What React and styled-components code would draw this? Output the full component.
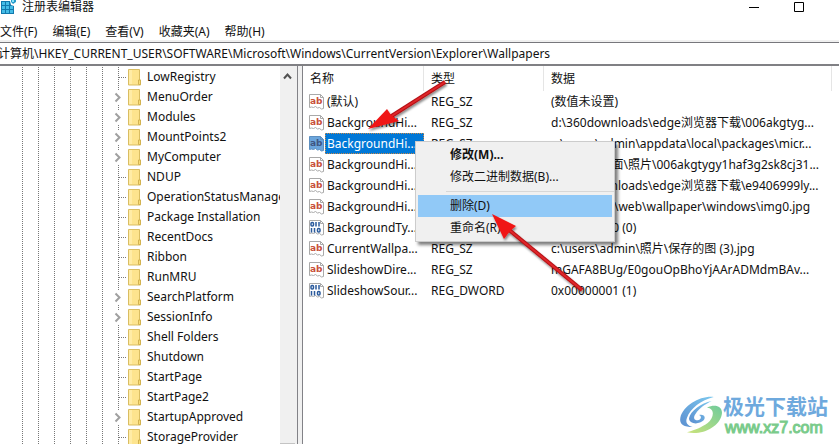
import React from 'react';
import styled, { createGlobalStyle, css } from 'styled-components';

const GlobalStyle = createGlobalStyle`
  * { box-sizing: border-box; }
  body {
    margin: 0;
    background: #fff;
    color: #111;
    font: 12px/20px "Noto Sans", "Noto Sans CJK SC", sans-serif;
    overflow: hidden;
  }
  button, input, table { font: inherit; color: inherit; }
`;

const Window = styled.div`
  position: relative;
  display: flex;
  flex-direction: column;
  height: 100vh;
  overflow: hidden;
`;

const TitleBar = styled.header`
  display: flex;
  align-items: flex-start;
  height: 20px;
`;

const Title = styled.h1`
  flex: 1;
  margin: 0 0 0 5px;
  font-size: 12px;
  font-weight: 400;
  line-height: 14px;
`;

const AppIcon = styled.svg`
  width: 17px;
  height: 15px;
`;

const CaptionButton = styled.button`
  width: 45px;
  height: 14px;
  padding: 0;
  border: 0;
  background: none;
  svg { display: block; margin: 0 auto; }
`;

const CaptionButtons = styled.div`
  display: flex;
  margin-right: 18px;
`;

const MenuBar = styled.nav`
  display: flex;
  gap: 15px;
  height: 22px;
  border-bottom: 2px solid #f0f0f0;
`;

const MenuButton = styled.button`
  padding: 2px 0 0;
  border: 0;
  background: none;
  line-height: 20px;
  white-space: nowrap;
`;

const AddressBar = styled.input`
  display: block;
  width: 100%;
  height: 24px;
  padding: 0 0 2px;
  border: 0;
  border-top: 1px solid #77777c;
  border-bottom: 2px solid #808084;
  border-radius: 0;
  outline: 0;
  background: #fff;
  text-indent: -2px;
`;

const Panes = styled.main`
  flex: 1;
  display: flex;
  min-height: 0;
`;

const TreePane = styled.section`
  flex: 0 0 298px;
  display: flex;
  min-width: 0;
  border-right: 1px solid #828287;
`;

const Tree = styled.ul`
  flex: 1 1 0;
  min-width: 0;
  margin: 0;
  padding: 1px 0 0;
  list-style: none;
  overflow: hidden;
`;

const TreeItem = styled.li`
  display: flex;
  align-items: center;
  height: 20px;
  white-space: nowrap;
`;

const Guides = styled.svg`
  flex: none;
  width: 127px;
  height: 20px;
`;

const FolderIcon = styled.svg`
  flex: none;
  width: 15px;
  height: 18px;
  margin-right: 5px;
`;

const ScrollBar = styled.div`
  flex: none;
  display: flex;
  flex-direction: column;
  justify-content: space-between;
  width: 17px;
  background: #f0f0f0;
`;

const ScrollButton = styled.button`
  width: 15px;
  height: 20px;
  padding: 0;
  border: 0;
  background: none;
  svg { display: block; margin: 0 auto; }
`;

const ScrollThumb = styled.div`
  width: 15px;
  height: 1px;
  background: #c4c4c4;
`;

const Splitter = styled.div`
  flex: none;
  width: 5px;
  background: #f0f0f0;
  border-right: 1px solid #828287;
`;

const ValuesPane = styled.section`
  flex: 1;
  min-width: 0;
  overflow: hidden;
`;

const Values = styled.table`
  width: 100%;
  table-layout: fixed;
  border-collapse: separate;
  border-spacing: 0;
`;

const Col = styled.col`
  width: ${(p) => p.$width};
`;

const HeadCell = styled.th`
  height: 25px;
  padding: 0 0 0 7px;
  border-right: 1px solid #e5e5e5;
  font-weight: 400;
  text-align: left;
  &:last-child { border: 0; }
`;

const Cell = styled.td`
  height: 21px;
  padding: 0 0 0 7px;
  line-height: 21px;
  white-space: nowrap;
`;

const NameCell = styled(Cell)`
  padding-left: 5px;
`;

const NameBox = styled.div`
  display: flex;
  align-items: center;
  height: 21px;
`;

const ValueIcon = styled.svg`
  flex: none;
  width: 17px;
  height: 17px;
`;

const ValueName = styled.span`
  flex: 1;
  height: 21px;
  padding-left: 2px;
  line-height: 21px;
  overflow: hidden;
  ${(p) => p.$selected && css`
    color: #fff;
    background: #0078d7;
    outline: 1px dotted #c98a4b;
    outline-offset: -1px;
  `}
`;

const ContextMenu = styled.div`
  position: absolute;
  left: 415px;
  top: 141px;
  display: flex;
  flex-direction: column;
  width: 200px;
  padding: 2px;
  border: 1px solid #ccc;
  background: #f0f0f0;
  box-shadow: 3px 3px 3px rgba(0, 0, 0, 0.5);
`;

const ContextItem = styled.button`
  height: 22px;
  padding: 0 0 0 32px;
  border: 0;
  background: ${(p) => (p.$active ? '#91c9f7' : 'transparent')};
  font-weight: ${(p) => (p.$strong ? 700 : 400)};
  line-height: 22px;
  text-align: left;
`;

const Separator = styled.hr`
  width: 168px;
  margin: 3px 0 3px 28px;
  border: 0;
  border-top: 1px solid #d7d7d7;
`;

const Arrows = styled.svg`
  position: absolute;
  left: 360px;
  top: 74px;
  width: 240px;
  height: 230px;
  pointer-events: none;
`;

const Watermark = styled.a`
  position: absolute;
  right: 11px;
  bottom: 6px;
  display: flex;
  align-items: center;
  text-decoration: none;
`;

const Swirl = styled.svg`
  width: 44px;
  height: 40px;
`;

const BrandText = styled.span`
  display: flex;
  flex-direction: column;
`;

const BrandName = styled.strong`
  color: #6ea9dd;
  font: 700 21px/26px "Noto Sans CJK SC", sans-serif;
`;

const BrandSite = styled.span`
  padding-left: 2px;
  color: #7acb8b;
  font: 16px/20px "Liberation Sans", sans-serif;
  -webkit-text-stroke: 1px #7acb8b;
`;

const MENUS = ['文件(F)', '编辑(E)', '查看(V)', '收藏夹(A)', '帮助(H)'];

const KEYS = [
  ['LowRegistry', false],
  ['MenuOrder', true],
  ['Modules', true],
  ['MountPoints2', true],
  ['MyComputer', true],
  ['NDUP', false],
  ['OperationStatusManager', false],
  ['Package Installation', false],
  ['RecentDocs', false],
  ['Ribbon', false],
  ['RunMRU', false],
  ['SearchPlatform', true],
  ['SessionInfo', true],
  ['Shell Folders', false],
  ['Shutdown', false],
  ['StartPage', false],
  ['StartPage2', false],
  ['StartupApproved', true],
  ['StorageProvider', false],
];

const VALUES = [
  ['(默认)', 'REG_SZ', '(数值未设置)'],
  ['BackgroundHi...', 'REG_SZ', 'd:\\360downloads\\edge浏览器下载\\006akgtyg...'],
  ['BackgroundHi...', 'REG_SZ', 'c:\\users\\admin\\appdata\\local\\packages\\micr...', true],
  ['BackgroundHi...', 'REG_SZ', 'c:\\users\\桌面\\照片\\006akgtygy1haf3g2sk8cj31...'],
  ['BackgroundHi...', 'REG_SZ', 'd:\\360downloads\\edge浏览器下载\\e9406999ly...'],
  ['BackgroundHi...', 'REG_SZ', 'c:\\windows\\web\\wallpaper\\windows\\img0.jpg'],
  ['BackgroundTy...', 'REG_DWORD', '0x00000000 (0)'],
  ['CurrentWallpa...', 'REG_SZ', 'c:\\users\\admin\\照片\\保存的图 (3).jpg'],
  ['SlideshowDire...', 'REG_SZ', 'mGAFA8BUg/E0gouOpBhoYjAArADMdmBAv...'],
  ['SlideshowSour...', 'REG_DWORD', '0x00000001 (1)'],
];

const GUIDE_X = [22, 38, 54, 70, 86, 102];

function RegistryLogo() {
  return (
    <AppIcon viewBox="0 0 17 15" aria-hidden="true">
      <path d="M1 1h9l1 4 3 1v8H1z" fill="#1279ad" />
      <path d="M2 2h3v3H2zM6 2h3v3H6zM2 6h3v3H2zM6 6h3v3H6zM10 6h3v3h-3zM2 10h3v3H2zM6 10h3v3H6zM10 10h3v3h-3z" fill="#45bce6" />
      <path d="M11 0h5v2l-3 2-2-2z" fill="#259bcb" />
      <path d="M12 0h2v2h-2z" fill="#8be3fa" />
    </AppIcon>
  );
}

function TreeGuides({ expandable }) {
  return (
    <Guides viewBox="0 0 127 20" aria-hidden="true">
      <g stroke="#777" strokeDasharray="1 1" shapeRendering="crispEdges">
        {GUIDE_X.map((x) => <path key={x} d={`M${x + 0.5} 0v20`} />)}
        {expandable
          ? <path d="M118.5 0v3M118.5 18v2" />
          : <path d="M118.5 0v20M119 10.5h7" />}
      </g>
      {expandable && <path d="M115.500 6.500l4 4-4 4" fill="none" stroke="#a0a0a0" strokeWidth="2" />}
    </Guides>
  );
}

function Folder() {
  return (
    <FolderIcon viewBox="0 0 15 18" aria-hidden="true">
      <path d="M1.500 1.500h11v10.500h1v5h-12z" fill="#fde48e" stroke="#d9bd62" />
      <path d="M2 2h3v14H2z" fill="#ffeca6" />
      <path d="M11.500 16.500v-4.500h2v4.500z" fill="#fbdc72" stroke="#d2b250" />
    </FolderIcon>
  );
}

function TypeIcon({ binary, selected }) {
  return (
    <ValueIcon viewBox="0 0 17 17" aria-hidden="true">
      <path
        d="M1.500 1.500h11l3 3v11l-2 .5-2-1.500-2 .5-2-1.500-2 1-2-.5-2 .5z"
        fill={selected ? '#6ba5dc' : '#fff'}
        stroke={selected ? '#5d8fc0' : '#a9a9a9'}
      />
      <path d="M12.500 1.500v3h3" fill="none" stroke={selected ? '#5d8fc0' : '#a9a9a9'} />
      {binary ? (
        <g fill="none" stroke="#2a5a9c" strokeWidth="1.500">
          <rect x="3" y="3.500" width="2.500" height="3.500" rx="1" />
          <path d="M8 3v4.500M11 3v4.500M3.500 9v4.500M6.500 9v4.500" />
          <rect x="9.500" y="9.500" width="2.500" height="3.500" rx="1" />
        </g>
      ) : (
        <text x="2" y="11" fill={selected ? '#3f5582' : '#c8503a'} fontFamily="DejaVu Sans, sans-serif" fontWeight="700" fontSize="9">ab</text>
      )}
    </ValueIcon>
  );
}

function Arrow({ shaft, head }) {
  return (
    <g>
      <path d={shaft} stroke="#b51216" strokeWidth="4" />
      <path d={shaft} stroke="#e0262a" strokeWidth="2" />
      <path d={head} fill="#f01414" />
    </g>
  );
}

function ArrowLayer() {
  return (
    <Arrows viewBox="360 74 240 230" aria-hidden="true">
      <defs>
        <filter id="arrowShadow" x="-20%" y="-20%" width="140%" height="140%">
          <feDropShadow dx="1" dy="2" stdDeviation="1" floodOpacity="0.45" />
        </filter>
      </defs>
      <g filter="url(#arrowShadow)">
        <Arrow shaft="M445 82L390 117" head="M368 129L387 109L391 115L399 121Z" />
        <Arrow shaft="M582 290L508 229" head="M492 214L516 226L510 231L504 239Z" />
      </g>
    </Arrows>
  );
}

function BrandSwirl() {
  return (
    <Swirl viewBox="14 22 132 120" aria-hidden="true">
      <defs>
        <linearGradient id="swirlBlue" x1="1" y1="0" x2="0" y2="1">
          <stop offset="0" stopColor="#7cc8ee" />
          <stop offset="1" stopColor="#5b8fd0" />
        </linearGradient>
        <linearGradient id="swirlGreen" x1="1" y1="0" x2="0" y2="1">
          <stop offset="0" stopColor="#6fcb9c" />
          <stop offset="1" stopColor="#cbe37a" />
        </linearGradient>
      </defs>
      <path d="M118 28C78 24 28 52 18 90C14 110 30 118 55 118C40 114 32 104 38 90C48 62 80 38 118 28Z" fill="url(#swirlBlue)" />
      <path d="M112 40C80 46 48 70 44 92C44 110 74 112 88 98C96 88 88 78 74 82C84 86 80 97 70 98C58 98 56 88 64 78C74 62 92 50 112 40Z" fill="url(#swirlBlue)" />
      <path d="M98 60C124 62 118 92 100 106C84 118 60 128 38 134C84 144 134 118 142 82C148 58 124 46 98 60Z" fill="url(#swirlGreen)" />
    </Swirl>
  );
}

export default function App() {
  return (
    <>
      <GlobalStyle />
      <Window>
        <TitleBar>
          <RegistryLogo />
          <Title>注册表编辑器</Title>
          <CaptionButtons>
            <CaptionButton aria-label="最小化">
              <svg width="10" height="12"><path d="M0 6.500h10" stroke="#000" /></svg>
            </CaptionButton>
            <CaptionButton aria-label="最大化">
              <svg width="10" height="12"><path d="M.5 1.500h9v9h-9z" fill="none" stroke="#000" /></svg>
            </CaptionButton>
          </CaptionButtons>
        </TitleBar>
        <MenuBar>
          {MENUS.map((label) => <MenuButton key={label}>{label}</MenuButton>)}
        </MenuBar>
        <AddressBar
          aria-label="地址"
          defaultValue={'计算机\\HKEY_CURRENT_USER\\SOFTWARE\\Microsoft\\Windows\\CurrentVersion\\Explorer\\Wallpapers'}
        />
        <Panes>
          <TreePane>
            <Tree>
              {KEYS.map(([name, expandable]) => (
                <TreeItem key={name}>
                  <TreeGuides expandable={expandable} />
                  <Folder />
                  {name}
                </TreeItem>
              ))}
            </Tree>
            <ScrollBar>
              <ScrollButton aria-label="向上滚动">
                <svg width="9" height="8"><path d="M1 6.500l3.500-4 3.500 4" fill="none" stroke="#505050" strokeWidth="2" /></svg>
              </ScrollButton>
              <ScrollThumb />
            </ScrollBar>
          </TreePane>
          <Splitter />
          <ValuesPane>
            <Values>
              <colgroup>
                <Col $width="121px" />
                <Col $width="120px" />
                <Col $width="auto" />
                <Col $width="7px" />
              </colgroup>
              <thead>
                <tr>
                  <HeadCell>名称</HeadCell>
                  <HeadCell>类型</HeadCell>
                  <HeadCell>数据</HeadCell>
                  <HeadCell aria-hidden="true" />
                </tr>
              </thead>
              <tbody>
                {VALUES.map(([name, type, data, selected], i) => (
                  <tr key={i}>
                    <NameCell>
                      <NameBox>
                        <TypeIcon binary={type === 'REG_DWORD'} selected={selected} />
                        <ValueName $selected={selected}>{name}</ValueName>
                      </NameBox>
                    </NameCell>
                    <Cell>{type}</Cell>
                    <Cell colSpan={2}>{data}</Cell>
                  </tr>
                ))}
              </tbody>
            </Values>
          </ValuesPane>
        </Panes>
        <ContextMenu role="menu">
          <ContextItem role="menuitem" $strong>修改(M)...</ContextItem>
          <ContextItem role="menuitem">修改二进制数据(B)...</ContextItem>
          <Separator />
          <ContextItem role="menuitem" $active>删除(D)</ContextItem>
          <ContextItem role="menuitem">重命名(R)</ContextItem>
        </ContextMenu>
        <ArrowLayer />
        <Watermark href="#">
          <BrandSwirl />
          <BrandText>
            <BrandName>极光下载站</BrandName>
            <BrandSite>www.xz7.com</BrandSite>
          </BrandText>
        </Watermark>
      </Window>
    </>
  );
}
